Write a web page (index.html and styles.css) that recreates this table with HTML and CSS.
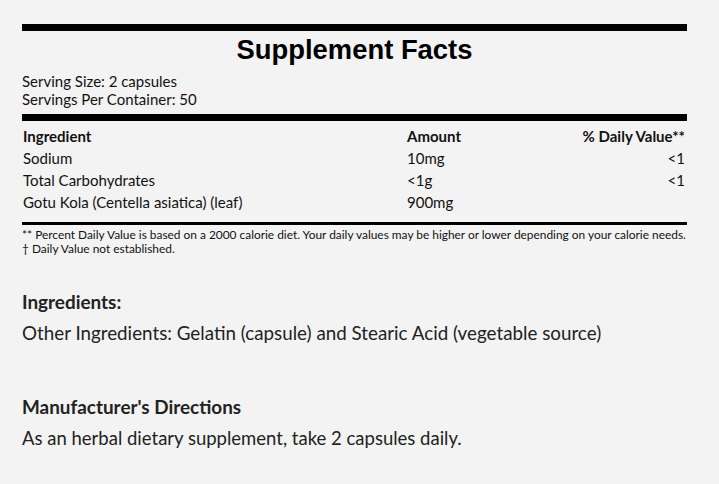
FILE: index.html
```html
<!DOCTYPE html>
<html lang="en">
<head>
<meta charset="utf-8">
<title>Supplement Facts</title>
<link rel="stylesheet" href="styles.css">
</head>
<body>
<main class="page">
  <section class="facts">
    <h1 class="facts-title">Supplement Facts</h1>
    <div class="serving">
      <div>Serving Size: 2 capsules</div>
      <div>Servings Per Container: 50</div>
    </div>
    <table class="facts-table">
      <thead>
        <tr>
          <th class="col-name">Ingredient</th>
          <th class="col-amount">Amount</th>
          <th class="col-dv">% Daily Value**</th>
        </tr>
      </thead>
      <tbody>
        <tr><td class="col-name">Sodium</td><td class="col-amount">10mg</td><td class="col-dv">&lt;1</td></tr>
        <tr><td class="col-name">Total Carbohydrates</td><td class="col-amount">&lt;1g</td><td class="col-dv">&lt;1</td></tr>
        <tr><td class="col-name">Gotu Kola (Centella asiatica) (leaf)</td><td class="col-amount">900mg</td><td class="col-dv"></td></tr>
      </tbody>
    </table>
    <div class="footnote">
      <div>** Percent Daily Value is based on a 2000 calorie diet. Your daily values may be higher or lower depending on your calorie needs.</div>
      <div>† Daily Value not established.</div>
    </div>
  </section>

  <section class="info">
    <h2 class="info-title">Ingredients:</h2>
    <p class="info-text">Other Ingredients: Gelatin (capsule) and Stearic Acid (vegetable source)</p>
  </section>

  <section class="info info-directions">
    <h2 class="info-title">Manufacturer's Directions</h2>
    <p class="info-text">As an herbal dietary supplement, take 2 capsules daily.</p>
  </section>
</main>
</body>
</html>
```
FILE: styles.css
```css
html, body {
  margin: 0;
  padding: 0;
  background: #f3f3f3;
}
body {
  font-family: Lato, "Liberation Sans", sans-serif;
  color: #111;
}
.page {
  width: 665px;
  padding: 24px 0 0 22px;
}
.facts {
  border-top: 7px solid #000;
}
.facts-title {
  margin: 4px 0 0;
  font-family: "Liberation Sans", Arial, sans-serif;
  font-weight: 700;
  font-size: 27.4px;
  line-height: 30px;
  text-align: center;
  color: #000;
}
.serving {
  margin-top: 7px;
  font-size: 15px;
  line-height: 18px;
  padding-bottom: 6px;
  border-bottom: 7px solid #000;
}
.facts-table {
  width: 100%;
  border-collapse: collapse;
  margin-top: 4px;
  font-size: 15px;
  line-height: 22px;
}
.facts-table th, .facts-table td {
  padding: 0;
  text-align: left;
  vertical-align: top;
}
.facts-table th {
  font-weight: 700;
}
.facts-table .col-name { width: 384px; padding-left: 1px; }
.facts-table .col-amount { width: 150px; }
.facts-table .col-dv { text-align: right; padding-right: 2px; }
.footnote {
  margin-top: 9px;
  border-top: 3px solid #000;
  padding-top: 3px;
  font-size: 11.9px;
  line-height: 14px;
}
.info {
  margin-top: 34px;
}
.info-directions {
  margin-top: 50px;
}
.info-title {
  margin: 0;
  font-size: 18.9px;
  font-weight: 700;
  line-height: 24px;
  color: #222;
}
.info-text {
  margin: 7px 0 0;
  font-size: 18.8px;
  line-height: 24px;
  color: #222;
}
.info-directions .info-text {
  font-size: 18.5px;
}
```
